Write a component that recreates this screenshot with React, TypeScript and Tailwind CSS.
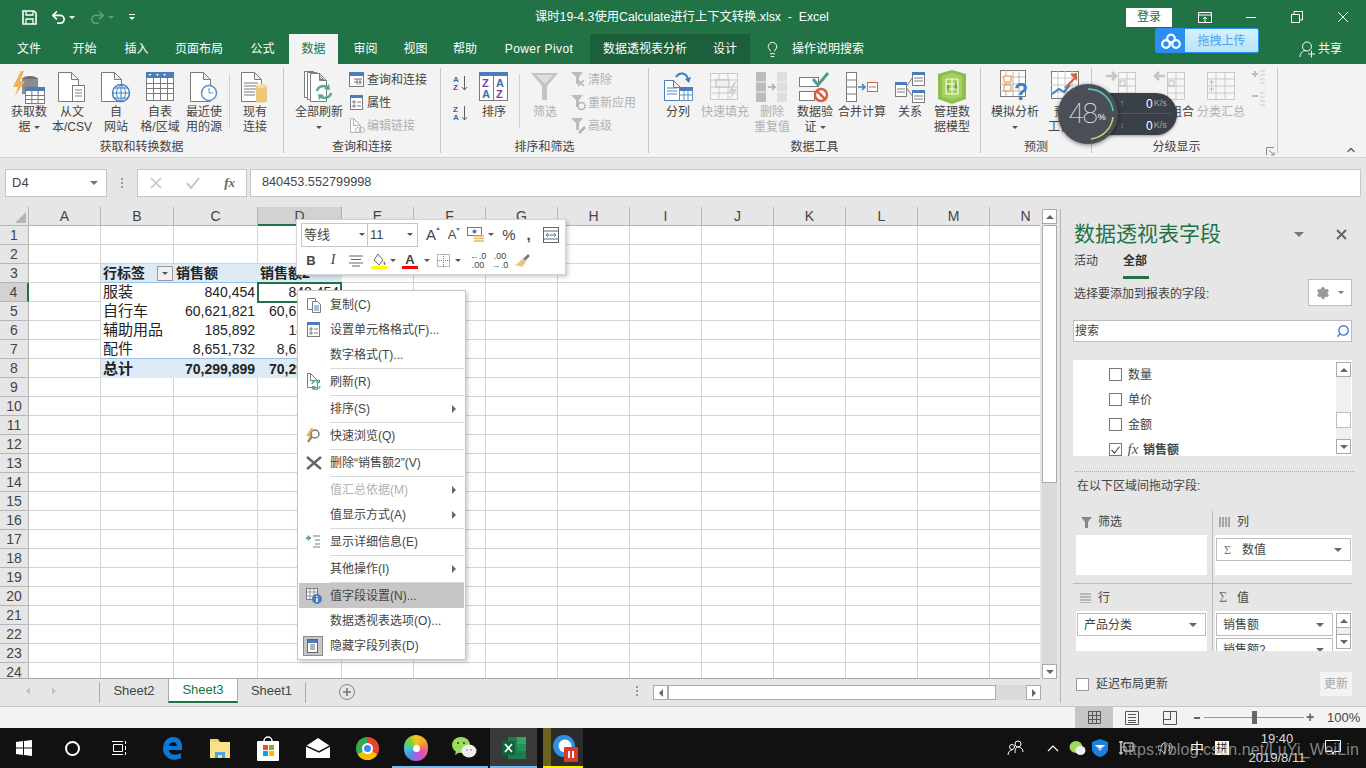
import type { ReactNode } from "react";
import { Undo2, Redo2, Lightbulb, Settings, Search, ChevronUp } from "lucide-react";

const GRAY = "#7b7b7b";

// ---- ribbon icons ----
function Svg({ w = 32, h = 32, children }: { w?: number; h?: number; children: ReactNode }) {
  return (
    <svg width={w} height={h} viewBox={`0 0 ${w} ${h}`} fill="none" className="shrink-0">
      {children}
    </svg>
  );
}

const Page = ({ x = 1, y = 1, w = 20, h = 29, c = GRAY }: { x?: number; y?: number; w?: number; h?: number; c?: string }) => (
  <path d={`M${x + 0.5} ${y + 0.5}h${w - 7}l7 7v${h - 7}h-${w}z M${x + w - 7 + 0.5} ${y + 0.5}v7h7`} stroke={c} fill="#fff" />
);

const TableGrid = ({ x, y, w, h, head = "#4a7ebb", c = GRAY }: { x: number; y: number; w: number; h: number; head?: string; c?: string }) => {
  const cw = w / 3;
  const ch = (h - 4) / 3;
  return (
    <g>
      <rect x={x + 0.5} y={y + 0.5} width={w} height={h} fill="#fff" stroke={c} />
      <rect x={x} y={y} width={w + 1} height={4} fill={head} />
      {[1, 2].map((i) => (
        <path key={i} d={`M${x + i * cw + 0.5} ${y + 4}v${h - 4}M${x} ${y + 4 + i * ch + 0.5}h${w}`} stroke={c} />
      ))}
    </g>
  );
};

const IconGetData = () => (
  <Svg w={36} h={34}>
    <ellipse cx="19" cy="9" rx="8" ry="3" fill="#6f6f6f" />
    <rect x="11" y="9" width="16" height="15" fill="#8c8c8c" />
    <path d="M10 1L2 17h5l-3 9 10-15H9l4-10z" fill="#eeb153" />
    <TableGrid x={14} y={17} w={19} h={16} />
  </Svg>
);
const IconText = () => (
  <Svg w={30} h={32}>
    <Page />
    <rect x="15.5" y="14.5" width="12" height="16" fill="#fff" stroke={GRAY} />
    <path d="M18 19h7M18 22h7M18 25h7" stroke={GRAY} />
  </Svg>
);
const IconWeb = () => (
  <Svg w={32} h={32}>
    <Page />
    <circle cx="21" cy="22" r="8.5" fill="#fff" stroke="#3f7fbf" strokeWidth="1.5" />
    <path d="M12.5 22h17M21 13.5v17M15 17h12M15 27h12M21 13.5c-6 5-6 12 0 17M21 13.5c6 5 6 12 0 17" stroke="#3f7fbf" />
  </Svg>
);
const IconTable = () => (
  <Svg w={30} h={32}>
    <rect x="1.5" y="1.5" width="27" height="28" fill="#fff" stroke={GRAY} />
    <rect x="1" y="1" width="28" height="6" fill="#4a7ebb" />
    {[8, 15, 22].map((x) => (
      <path key={x} d={`M${x + 0.5} 7v22`} stroke={GRAY} />
    ))}
    {[12, 17, 22].map((y) => (
      <path key={y} d={`M2 ${y + 0.5}h26`} stroke={GRAY} />
    ))}
    <path d="M3.5 3h3l-1.5 2zM11 3h3l-1.5 2zM18 3h3l-1.5 2z" fill="#fff" />
  </Svg>
);
const IconRecent = () => (
  <Svg w={30} h={32}>
    <Page />
    <circle cx="20" cy="22" r="7.5" fill="#fff" stroke="#5b90c8" strokeWidth="1.5" />
    <path d="M20 17v5h4" stroke="#5b90c8" />
  </Svg>
);
const IconExisting = () => (
  <Svg w={30} h={32}>
    <Page />
    <path d="M4 12h14M4 15h14M4 18h14M4 21h11M4 24h11" stroke={GRAY} />
    <rect x="16" y="15" width="11" height="15" fill="#eec77d" />
    <ellipse cx="21.5" cy="15" rx="5.5" ry="2" fill="#f4d9a4" />
    <ellipse cx="21.5" cy="30" rx="5.5" ry="1.5" fill="#eec77d" />
  </Svg>
);
const IconRefreshAll = () => (
  <Svg w={32} h={34}>
    <Page x={1} y={1} w={16} h={26} />
    <Page x={4} y={2} w={16} h={27} />
    <Page x={7} y={3} w={16} h={28} />
    <path d="M14 21a6 6 0 0 1 11-2M28 23a6 6 0 0 1-11 2" stroke="#5aa894" strokeWidth="2.5" />
    <path d="M26 14l1 6-6-1zM16 30l-1-6 6 1z" fill="#5aa894" />
  </Svg>
);
const SmallQuery = () => (
  <Svg w={16} h={16}>
    <rect x="0.5" y="0.5" width="14" height="14" fill="#fff" stroke={GRAY} />
    <rect x="0" y="0" width="15" height="4" fill="#4a7ebb" />
    <path d="M5 7h8M5 10h8M8 7v6M11 7v6" stroke={GRAY} />
  </Svg>
);
const SmallProps = () => (
  <Svg w={16} h={16}>
    <rect x="1.5" y="0.5" width="12" height="14" fill="#fff" stroke={GRAY} />
    <rect x="1" y="0" width="13" height="3" fill="#4a7ebb" />
    <path d="M4 6h2v2H4zM8 7h4M4 10h2v2H4zM8 11h4" stroke={GRAY} />
  </Svg>
);
const SmallLink = () => (
  <Svg w={16} h={16}>
    <Page x={1} y={0} w={10} h={14} c="#b5b5b5" />
    <circle cx="9" cy="12" r="2.5" stroke="#b5b5b5" />
    <circle cx="13" cy="12" r="2.5" stroke="#b5b5b5" />
  </Svg>
);
const SortSmall = ({ up }: { up?: boolean }) => (
  <Svg w={16} h={17}>
    <text x="0" y="7" fontSize="8" fontFamily="Liberation Sans" fontWeight="700" fill={up ? "#2f6fad" : "#7a3f9d"}>
      {up ? "A" : "Z"}
    </text>
    <text x="0" y="15" fontSize="8" fontFamily="Liberation Sans" fontWeight="700" fill={up ? "#7a3f9d" : "#2f6fad"}>
      {up ? "Z" : "A"}
    </text>
    <path d="M11.5 1v14M9 12l2.5 3 2.5-3" stroke="#606060" />
  </Svg>
);
const IconSort = () => (
  <Svg w={30} h={32}>
    <rect x="0.5" y="1.5" width="28" height="28" fill="#fff" stroke={GRAY} />
    <rect x="0" y="1" width="29" height="4" fill="#4a7ebb" />
    <path d="M14.5 5v24" stroke={GRAY} />
    <text x="3" y="16" fontSize="11" fontFamily="Liberation Sans" fontWeight="700" fill="#7a3f9d">Z</text>
    <text x="3" y="27" fontSize="11" fontFamily="Liberation Sans" fontWeight="700" fill="#2f6fad">A</text>
    <text x="17" y="16" fontSize="11" fontFamily="Liberation Sans" fontWeight="700" fill="#2f6fad">A</text>
    <text x="17" y="27" fontSize="11" fontFamily="Liberation Sans" fontWeight="700" fill="#7a3f9d">Z</text>
  </Svg>
);
const IconFunnel = () => (
  <Svg w={30} h={32}>
    <path d="M1 2h27L17 15v14h-5V15z" fill="#c4c4c4" />
    <path d="M6 4h17l-8 9z" fill="#dedede" />
  </Svg>
);
const SmallFunnel = ({ mark }: { mark: "x" | "r" | "p" }) => (
  <Svg w={17} h={17}>
    <path d="M1 1h12L9 6v7H6V6z" fill="#bcbcbc" />
    {mark === "x" && <path d="M8 9l6 6M14 9l-6 6" stroke="#b5b5b5" strokeWidth="1.5" />}
    {mark === "r" && <circle cx="11.5" cy="12" r="3.5" stroke="#b5b5b5" strokeWidth="1.5" />}
    {mark === "p" && <path d="M8 15l6-6 2 2-6 6z" fill="#b5b5b5" />}
  </Svg>
);
const IconColumns = () => (
  <Svg w={32} h={32}>
    <Page x={2} y={9} w={16} h={20} c="#4a7ebb" />
    <path d="M5 17h10M5 20h10M5 23h10" stroke="#4a7ebb" />
    <rect x="17.5" y="16.5" width="13" height="13" fill="#fff" stroke="#5f8fbf" />
    <rect x="17" y="16" width="14" height="4" fill="#4a7ebb" />
    <path d="M22 20v9M26 20v9M18 24h12" stroke="#5f8fbf" />
    <path d="M14 6c3-5 10-5 12 2" stroke="#3b7fc4" strokeWidth="2" />
    <path d="M29 6l-2 6-4-4z" fill="#3b7fc4" />
  </Svg>
);
const IconFlash = () => (
  <Svg w={32} h={32}>
    <rect x="1.5" y="2.5" width="27" height="26" fill="#f7f7f7" stroke="#c9c9c9" />
    <path d="M1 9h27M1 16h27M1 22h27M10 3v25M19 3v25" stroke="#c9c9c9" />
    <rect x="7" y="9" width="13" height="7" fill="#f0f0f0" stroke="#b9b9b9" />
    <path d="M25 11l-6 11h4l-3 8 8-12h-4l3-7z" fill="#d0d0d0" />
  </Svg>
);
const IconDedupe = () => (
  <Svg w={34} h={32}>
    <rect x="1" y="1" width="10" height="30" fill="#bcbcbc" />
    <rect x="22" y="1" width="10" height="30" fill="#dedede" />
    <path d="M1 11h10M1 21h10M22 11h10M22 21h10" stroke="#f3f3f3" />
    <path d="M13 16h6M17 13l3 3-3 3" stroke="#aaa" strokeWidth="1.5" />
  </Svg>
);
const IconValidate = () => (
  <Svg w={34} h={32}>
    <rect x="1.5" y="6.5" width="19" height="9" fill="#fff" stroke={GRAY} />
    <rect x="1.5" y="20.5" width="15" height="9" fill="#fff" stroke={GRAY} />
    <path d="M15 8l5 6 10-12" stroke="#4f9d8c" strokeWidth="3" />
    <circle cx="23" cy="24" r="6" fill="#fff" stroke="#d9603e" strokeWidth="2.5" />
    <path d="M19 20l8 8" stroke="#d9603e" strokeWidth="2.5" />
  </Svg>
);
const IconConsolidate = () => (
  <Svg w={34} h={32}>
    <rect x="1.5" y="1.5" width="10" height="29" fill="#fff" stroke={GRAY} />
    <path d="M1 9h10M1 16h10M1 23h10" stroke={GRAY} />
    <path d="M13 16h7M17 13l3 3-3 3" stroke="#3b7fc4" strokeWidth="1.5" />
    <rect x="22.5" y="11.5" width="10" height="9" fill="#fff" stroke="#d9603e" />
    <path d="M24 16h7" stroke="#d9603e" />
  </Svg>
);
const IconRelations = () => (
  <Svg w={32} h={32}>
    <path d="M12 16L19 6M12 16l7 10" stroke={GRAY} />
    <rect x="1.5" y="11.5" width="11" height="14" fill="#fff" stroke={GRAY} />
    <rect x="1" y="11" width="12" height="3" fill="#4a7ebb" />
    <rect x="18.5" y="1.5" width="12" height="13" fill="#fff" stroke={GRAY} />
    <rect x="18" y="1" width="13" height="3" fill="#4a7ebb" />
    <rect x="18.5" y="19.5" width="12" height="12" fill="#fff" stroke={GRAY} />
    <rect x="18" y="19" width="13" height="3" fill="#4a7ebb" />
    <path d="M3 18h8M3 21h8M20 7h9M20 10h9M20 25h9M20 28h9" stroke={GRAY} />
  </Svg>
);
const IconModel = () => (
  <Svg w={30} h={34}>
    <path d="M15 0l14 4v25l-14 5-14-5V4z" fill="#8cc04b" />
    <path d="M5 6l10-3 10 3v21l-10 3-10-3z" fill="#a4d05f" />
    <path d="M9 9h12v15H9z" stroke="#fff" />
    <path d="M15 9v15M9 14h12M9 19h12" stroke="#fff" />
    <path d="M11 20v-5M19 13v6" stroke="#3c6e28" />
  </Svg>
);
const IconWhatIf = () => (
  <Svg w={30} h={34}>
    <rect x="0.5" y="0.5" width="25" height="26" fill="#fff" stroke={GRAY} />
    <path d="M0 7h25M0 14h25M0 21h25M6 0v26M13 0v26M19 0v26" stroke="#b5b5b5" />
    <path d="M4 6h7v6H4zM4 15h7v6H4z" stroke="#e08a3c" fill="#fff" />
    <text x="14" y="30" fontSize="23" fontFamily="Liberation Sans" fontWeight="700" fill="#3f7fbf">?</text>
  </Svg>
);
const IconForecast = () => (
  <Svg w={30} h={32}>
    <rect x="0.5" y="0.5" width="27" height="27" fill="#fff" stroke={GRAY} />
    <path d="M0 7h27M0 14h27M0 21h27M7 0v27M14 0v27M21 0v27" stroke="#c9c9c9" />
    <path d="M1 23l7-5 5 3 6-7" stroke="#3f7fbf" strokeWidth="2" />
    <path d="M14 17l11-11" stroke="#d9603e" strokeWidth="2" />
    <path d="M26 2v8l-7-7z" fill="#d9603e" />
  </Svg>
);
const IconGroup = ({ back }: { back?: boolean }) => (
  <Svg w={32} h={32}>
    <rect x="13.5" y="1.5" width="17" height="27" fill="#f7f7f7" stroke="#c9c9c9" />
    <path d="M22 1v27M13 8h17M13 15h17M13 22h17" stroke="#c9c9c9" />
    <rect x="15" y="10" width="5" height="5" stroke="#bdbdbd" />
    <path d={back ? "M11 5H1M5 1L1 5l4 4" : "M1 5h10M7 1l4 4-4 4"} stroke="#c4c4c4" strokeWidth="2.5" />
  </Svg>
);
const IconSubtotal = () => (
  <Svg w={30} h={32}>
    <rect x="1.5" y="1.5" width="27" height="27" fill="#f7f7f7" stroke="#c9c9c9" />
    <path d="M1 8h27M1 15h27M1 22h27M10 1v27M19 1v27" stroke="#c9c9c9" />
    <path d="M3 11h5M5.5 9v5M3 18h5M5.5 16v5" stroke="#bdbdbd" />
  </Svg>
);

// ---- ribbon building blocks ----
function Big({ w, icon, l1, l2, off, caret }: { w: string; icon: ReactNode; l1: string; l2?: ReactNode; off?: boolean; caret?: boolean }) {
  return (
    <div className={`flex flex-col items-center shrink-0 whitespace-nowrap ${w} ${off ? "text-[#b1b1b1]" : "text-[#444]"}`}>
      <div className="h-[37px] flex items-center justify-center">{icon}</div>
      <div className="leading-[15px] h-[15px] text-center">{l1}</div>
      <div className="leading-[15px] h-[15px] text-center flex items-center gap-[3px]">
        {l2}
        {caret && <Caret />}
      </div>
    </div>
  );
}

const Caret = ({ c = "border-t-[#555]" }: { c?: string }) => (
  <span className={`inline-block w-0 h-0 border-x-[3px] border-x-transparent border-t-[3px] ${c}`} />
);

function Small({ icon, text, off }: { icon: ReactNode; text: string; off?: boolean }) {
  return (
    <div className={`h-[23px] flex items-center whitespace-nowrap ${off ? "text-[#b1b1b1]" : "text-[#444]"}`}>
      <span className="w-[18px] flex">{icon}</span>
      {text}
    </div>
  );
}

function Group({ w, label, children, pr }: { w: string; label: string; children: ReactNode; pr?: string }) {
  return (
    <div className={`flex flex-col shrink-0 ${w}`}>
      <div className="flex h-[73px] pt-1">{children}</div>
      <div className={`h-[15px] leading-[15px] mt-[3px] text-center text-[#444] ${pr ?? ""}`}>{label}</div>
    </div>
  );
}

const GroupSep = () => <div className="w-px shrink-0 my-1 bg-[#c6c6c6]" />;
const VSep = () => <div className="w-px h-[54px] mt-[6px] shrink-0 bg-[#d4d4d4]" />;

function Ribbon() {
  return (
    <div className="relative flex h-[94px] bg-[#f3f3f3] border-b border-[#d2d2d2] text-xs">
      <Group w="w-[283px]" label="获取和转换数据">
        <div className="w-[7px]" />
        <Big w="w-[44px]" icon={<IconGetData />} l1="获取数" l2="据" caret />
        <Big w="w-[42px]" icon={<IconText />} l1="从文" l2="本/CSV" />
        <Big w="w-[46px]" icon={<IconWeb />} l1="自" l2="网站" />
        <Big w="w-[42px]" icon={<IconTable />} l1="自表" l2="格/区域" />
        <Big w="w-[46px]" icon={<IconRecent />} l1="最近使" l2="用的源" />
        <div className="w-[2px]" />
        <VSep />
        <Big w="w-[50px]" icon={<IconExisting />} l1="现有" l2="连接" />
      </Group>
      <GroupSep />
      <Group w="w-[156px]" label="查询和连接">
        <div className="w-[10px]" />
        <Big w="w-[50px]" icon={<IconRefreshAll />} l1="全部刷新" caret />
        <div className="w-[5px]" />
        <div className="flex flex-col">
          <Small icon={<SmallQuery />} text="查询和连接" />
          <Small icon={<SmallProps />} text="属性" />
          <Small icon={<SmallLink />} text="编辑链接" off />
        </div>
      </Group>
      <GroupSep />
      <Group w="w-[207px]" label="排序和筛选">
        <div className="w-[12px]" />
        <div className="flex flex-col gap-[13px] pt-[7px]">
          <SortSmall up />
          <SortSmall />
        </div>
        <Big w="w-[50px]" icon={<IconSort />} l1="排序" />
        <VSep />
        <div className="w-[5px]" />
        <Big w="w-[40px]" icon={<IconFunnel />} l1="筛选" off />
        <div className="w-[5px]" />
        <div className="flex flex-col">
          <Small icon={<SmallFunnel mark="x" />} text="清除" off />
          <Small icon={<SmallFunnel mark="r" />} text="重新应用" off />
          <Small icon={<SmallFunnel mark="p" />} text="高级" off />
        </div>
      </Group>
      <GroupSep />
      <Group w="w-[331px]" label="数据工具">
        <div className="w-[6px]" />
        <Big w="w-[46px]" icon={<IconColumns />} l1="分列" />
        <Big w="w-[48px]" icon={<IconFlash />} l1="快速填充" off />
        <Big w="w-[46px]" icon={<IconDedupe />} l1="删除" l2="重复值" off />
        <Big w="w-[40px]" icon={<IconValidate />} l1="数据验" l2="证" caret />
        <Big w="w-[54px]" icon={<IconConsolidate />} l1="合并计算" />
        <Big w="w-[42px]" icon={<IconRelations />} l1="关系" />
        <Big w="w-[42px]" icon={<IconModel />} l1="管理数" l2="据模型" />
      </Group>
      <GroupSep />
      <Group w="w-[110px]" label="预测">
        <div className="w-[8px]" />
        <Big w="w-[52px]" icon={<IconWhatIf />} l1="模拟分析" caret />
        <Big w="w-[50px]" icon={<IconForecast />} l1="预测" l2="工作表" />
      </Group>
      <GroupSep />
      <Group w="w-[185px]" label="分级显示" pr="pr-[16px]">
        <div className="w-[5px]" />
        <Big w="w-[48px]" icon={<IconGroup />} l1="组合" />
        <Big w="w-[50px]" icon={<IconGroup back />} l1="取消组合" />
        <Big w="w-[52px]" icon={<IconSubtotal />} l1="分类汇总" off />
        <div className="w-[5px]" />
        <div className="flex flex-col gap-[8px] pt-[2px]">
          <Svg w={14} h={14}>
            <path d="M0 4h6M3 1v6" stroke="#bdbdbd" strokeWidth="2" />
            <path d="M8 1h5M8 5h5M8 9h5M8 13h5" stroke="#c9c9c9" />
          </Svg>
          <Svg w={14} h={14}>
            <path d="M0 4h6" stroke="#bdbdbd" strokeWidth="2" />
            <path d="M8 1h5M8 5h5M8 9h5M8 13h5" stroke="#c9c9c9" />
          </Svg>
        </div>
      </Group>
      <GroupSep />
      {/* dialog launcher + collapse chevron */}
      <div className="absolute left-[1266px] top-[83px]">
        <Svg w={9} h={9}>
          <path d="M0.5 8V0.5H8" stroke="#8a8a8a" />
          <path d="M3 3l5 5M8 5v3H5" stroke="#8a8a8a" />
        </Svg>
      </div>
      <ChevronUp className="absolute left-[1345px] top-[80px] w-3 h-3 text-[#666]" strokeWidth={3} />
    </div>
  );
}

// ---- title bar + tabs ----
function TitleBar() {
  return (
    <div className="relative h-[34px] bg-[#217346] text-white flex items-center shrink-0">
      <div className="flex items-center h-full">
        <div className="w-[22px]" />
        <Svg w={15} h={15}>
          <path d="M1 1h11l2 2v11H1z" stroke="#fff" strokeWidth="1.6" />
          <path d="M4 1v4h7V1M4 14V9h7v5" stroke="#fff" strokeWidth="1.3" />
        </Svg>
        <div className="w-[13px]" />
        <Undo2 className="w-[17px] h-[17px]" strokeWidth={2.4} />
        <div className="w-[2px]" />
        <Caret c="border-t-white" />
        <div className="w-[14px]" />
        <Redo2 className="w-[17px] h-[17px] text-[#5f9c7c]" strokeWidth={2.4} />
        <div className="w-[2px]" />
        <Caret c="border-t-[#5f9c7c]" />
        <div className="w-[15px]" />
        <span className="flex flex-col items-center gap-[2px]">
          <span className="w-[6px] h-px bg-white" />
          <Caret c="border-t-white" />
        </span>
      </div>
      <div className="absolute left-[535px] top-0 h-full flex items-center text-[12.3px] whitespace-pre">
        课时19-4.3使用Calculate进行上下文转换.xlsx  -  Excel
      </div>
      <div className="ml-auto flex items-center h-full">
        <div className="w-[46px] h-[19px] bg-white text-[#217346] text-xs flex items-center justify-center mr-[10px]">登录</div>
        <div className="w-[46px] flex justify-center">
          <Svg w={14} h={14}>
            <path d="M0.5 2.5h13v10h-13zM0.5 5h13M7 12V7M5 9l2-2 2 2" stroke="#fff" />
          </Svg>
        </div>
        <div className="w-[46px] flex justify-center">
          <span className="w-[10px] h-px bg-white" />
        </div>
        <div className="w-[46px] flex justify-center">
          <Svg w={12} h={12}>
            <path d="M0.5 3.5h8v8h-8zM3 3V0.5h8.5V9H9" stroke="#fff" />
          </Svg>
        </div>
        <div className="w-[46px] flex justify-center">
          <Svg w={12} h={12}>
            <path d="M1 1l10 10M11 1L1 11" stroke="#fff" />
          </Svg>
        </div>
      </div>
    </div>
  );
}

const tabs: [string, string][] = [
  ["文件", "w-[58px]"],
  ["开始", "w-[53px]"],
  ["插入", "w-[51px]"],
  ["页面布局", "w-[74px]"],
  ["公式", "w-[53px]"],
];
const tabs2: [string, string][] = [
  ["审阅", "w-[55px]"],
  ["视图", "w-[45px]"],
  ["帮助", "w-[54px]"],
];

function Tabs() {
  return (
    <div className="relative h-[30px] bg-[#217346] text-white text-xs flex shrink-0">
      {tabs.map(([t, w]) => (
        <div key={t} className={`${w} flex items-center justify-center`}>{t}</div>
      ))}
      <div className="w-[49px] bg-[#f3f3f3] text-[#217346] flex items-center justify-center">数据</div>
      {tabs2.map(([t, w]) => (
        <div key={t} className={`${w} flex items-center justify-center`}>{t}</div>
      ))}
      <div className="w-[94px] flex items-center justify-center tracking-[0.4px]">Power Pivot</div>
      <div className="w-[4px]" />
      <div className="w-[110px] bg-[#1e5f3b] flex items-center justify-center">数据透视表分析</div>
      <div className="w-[50px] bg-[#1e5f3b] flex items-center justify-center">设计</div>
      <div className="w-[14px]" />
      <div className="flex items-center">
        <Lightbulb className="w-[17px] h-[19px]" strokeWidth={1.4} />
      </div>
      <div className="w-[11px]" />
      <div className="flex items-center">操作说明搜索</div>
      <div className="ml-auto mr-[24px] flex items-center gap-[2px]">
        <Svg w={17} h={17}>
          <circle cx="8" cy="5.5" r="4.5" stroke="#fff" />
          <path d="M1 16c0-4 2.5-6.5 6-6.5M9 13h7M12.5 9.5v7" stroke="#fff" />
        </Svg>
        共享
      </div>
    </div>
  );
}

// ---- formula bar ----
function FormulaBar() {
  return (
    <div className="h-[49px] bg-[#e6e6e6] flex items-start pt-[11px] pl-[5px] pr-[5px] shrink-0 text-[#444]">
      <div className="w-[102px] h-[28px] bg-white border border-[#c6c6c6] flex items-center justify-between px-[6px] text-[13px]">
        D4
        <span className="inline-block w-0 h-0 border-x-[4px] border-x-transparent border-t-[4px] border-t-[#777] mr-[2px]" />
      </div>
      <div className="w-[30px] h-[28px] flex flex-col items-center justify-center gap-[2px]">
        <span className="w-[2px] h-[2px] bg-[#999]" />
        <span className="w-[2px] h-[2px] bg-[#999]" />
        <span className="w-[2px] h-[2px] bg-[#999]" />
      </div>
      <div className="w-[110px] h-[28px] bg-white border border-[#c6c6c6] flex items-center justify-between pl-[12px] pr-[11px]">
        <Svg w={12} h={12}>
          <path d="M1 1l10 10M11 1L1 11" stroke="#c4c4c4" strokeWidth="1.6" />
        </Svg>
        <Svg w={14} h={12}>
          <path d="M1 6l4 5 8-10" stroke="#c4c4c4" strokeWidth="2" />
        </Svg>
        <span className="font-['Liberation_Serif',serif] italic font-bold text-[13px] text-[#666]">fx</span>
      </div>
      <div className="w-[3px]" />
      <div className="flex-1 h-[28px] bg-white border border-[#c6c6c6] flex items-center pl-[11px] text-[12.7px]">840453.552799998</div>
    </div>
  );
}

// ---- sheet ----
const colLetters = ["A", "B", "C", "D", "E", "F", "G", "H", "I", "J", "K", "L", "M", "N"];
const cellBase = "border-r border-b border-[#d4d4d4] overflow-hidden whitespace-nowrap flex items-center";

const pivot: Record<number, [string, string, string]> = {
  4: ["服装", "840,454", "840,454"],
  5: ["自行车", "60,621,821", "60,621,821"],
  6: ["辅助用品", "185,892", "185,892"],
  7: ["配件", "8,651,732", "8,651,732"],
  8: ["总计", "70,299,899", "70,299,899"],
};

function SheetCell({ row, col }: { row: number; col: number }) {
  // B = 1, C = 2, D = 3
  if (row === 3 && col >= 1 && col <= 3) {
    return (
      <div className="border-b border-[#9bc2e6] bg-[#ddebf7] overflow-hidden whitespace-nowrap flex items-center pl-[2px] pt-px font-bold text-[14px] text-[#222] justify-between">
        {col === 1 && "行标签"}
        {col === 1 && (
          <span className="w-[16px] h-[15px] bg-[#f0f0f0] border border-[#999] flex items-center justify-center mr-px">
            <Caret />
          </span>
        )}
        {col === 2 && "销售额"}
        {col === 3 && "销售额2"}
      </div>
    );
  }
  const data = pivot[row];
  if (data && col >= 1 && col <= 3) {
    const total = row === 8;
    const last = row === 7;
    return (
      <div
        className={`overflow-hidden whitespace-nowrap flex items-center pt-px text-[#222] ${col === 1 ? "pl-[2px] text-[15px]" : "justify-end pr-[3px] text-[14px]"} ${
          total ? "bg-[#ddebf7] font-bold text-[14px]" : "border-b"
        } ${last ? "border-[#9bc2e6]" : "border-transparent"}`}
      >
        {data[col - 1]}
      </div>
    );
  }
  return <div className={cellBase} />;
}

function Sheet() {
  const rows = Array.from({ length: 24 }, (_, i) => i + 1);
  return (
    <div className="relative w-[1040px] h-[472px] overflow-hidden bg-white border-b border-[#aaa]">
      <div className="grid w-[1062px] grid-cols-[29px_72px_73px_84px_84px_72px_72px_72px_72px_72px_72px_72px_72px_72px_72px] auto-rows-[19px] font-['Liberation_Sans','Noto_Sans_CJK_SC',sans-serif]">
        <div className="bg-[#e6e6e6] border-r border-b border-[#b5b5b5] flex items-end justify-end pr-[2px] pb-[2px]">
          <span className="w-0 h-0 border-l-[11px] border-l-transparent border-b-[11px] border-b-[#b5b5b5]" />
        </div>
        {colLetters.map((c) => (
          <div
            key={c}
            className={`flex items-center justify-center pt-px text-[14px] text-[#444] border-r ${
              c === "D" ? "bg-[#d2d2d2] border-b-2 border-b-[#217346] border-r-[#ababab]" : "bg-[#e6e6e6] border-b border-b-[#b5b5b5] border-r-[#b5b5b5]"
            }`}
          >
            {c}
          </div>
        ))}
        {rows.map((r) => (
          <div key={r} className="contents">
            <div
              className={`flex items-center justify-center pt-px text-[14px] text-[#444] border-b border-b-[#b5b5b5] ${
                r === 4 ? "bg-[#d2d2d2] border-r-2 border-r-[#217346]" : "bg-[#e6e6e6] border-r border-r-[#b5b5b5]"
              }`}
            >
              {r}
            </div>
            {colLetters.map((_, i) => (
              <SheetCell key={i} row={r} col={i} />
            ))}
          </div>
        ))}
      </div>
      {/* selected cell outline */}
      <div className="absolute left-[257px] top-[75px] w-[85px] h-[21px] border-2 border-[#217346]" />
    </div>
  );
}

function ScrollBtn({ dir }: { dir: "up" | "down" | "left" | "right" }) {
  const tri =
    dir === "up"
      ? "border-x-[4px] border-x-transparent border-b-[4px] border-b-[#666]"
      : dir === "down"
      ? "border-x-[4px] border-x-transparent border-t-[4px] border-t-[#666]"
      : dir === "left"
      ? "border-y-[4px] border-y-transparent border-r-[4px] border-r-[#666]"
      : "border-y-[4px] border-y-transparent border-l-[4px] border-l-[#666]";
  return (
    <div className="w-[15px] h-[15px] bg-white border border-[#ababab] flex items-center justify-center shrink-0">
      <span className={`w-0 h-0 ${tri}`} />
    </div>
  );
}

function SheetTabs() {
  return (
    <div className="h-[27px] flex bg-[#e6e6e6] text-[14px] text-[#444]">
      <div className="w-[100px] flex items-center pl-[26px] gap-[22px] pb-[3px] border-r border-[#ababab] my-[3px]">
        <span className="w-0 h-0 border-y-[4px] border-y-transparent border-r-[4px] border-r-[#c4c4c4]" />
        <span className="w-0 h-0 border-y-[4px] border-y-transparent border-l-[4px] border-l-[#c4c4c4]" />
      </div>
      <div className="w-[68px] flex items-center justify-center pb-[3px] text-[13px]">Sheet2</div>
      <div className="w-[70px] h-[25px] bg-white border-x border-[#ababab] border-b-2 border-b-[#217346] text-[#217346] flex items-center justify-center text-[13px] -mt-px">Sheet3</div>
      <div className="w-[68px] flex items-center justify-center pb-[3px] text-[13px] border-r border-[#ababab] my-[3px]">Sheet1</div>
      <div className="w-[33px]" />
      <div className="w-[16px] h-[16px] mt-[5px] rounded-full border border-[#888] flex items-center justify-center text-[#777]">
        <Svg w={10} h={10}>
          <path d="M5 1v8M1 5h8" stroke="#777" strokeWidth="1.6" />
        </Svg>
      </div>
      <div className="w-[274px]" />
      <div className="w-[15px] flex flex-col items-center gap-[2px] pt-[7px]">
        <span className="w-[2px] h-[2px] bg-[#999]" />
        <span className="w-[2px] h-[2px] bg-[#999]" />
        <span className="w-[2px] h-[2px] bg-[#999]" />
      </div>
      <div className="w-[9px]" />
      <div className="flex h-[15px] mt-[6px]">
        <ScrollBtn dir="left" />
        <div className="w-[328px] bg-white border border-[#ababab]" />
        <div className="w-[30px] bg-[#dadada]" />
        <ScrollBtn dir="right" />
      </div>
    </div>
  );
}

// ---- context menu ----
type MenuItem = { t: string; i?: ReactNode; off?: boolean; sub?: boolean; hl?: boolean; sep?: boolean };

const menu: MenuItem[] = [
  {
    t: "复制(C)",
    i: (
      <Svg w={16} h={16}>
        <path d="M1.5 1.5h8v11h-8z" stroke={GRAY} fill="#fff" />
        <path d="M6.5 4.5h5l3 3v8h-8z" stroke={GRAY} fill="#fff" />
        <path d="M8 9h5M8 11h5M8 13h5" stroke="#4a7ebb" />
      </Svg>
    ),
  },
  { t: "设置单元格格式(F)...", i: <SmallProps /> },
  { t: "数字格式(T)...", sep: true },
  {
    t: "刷新(R)",
    sep: true,
    i: (
      <Svg w={16} h={17}>
        <Page x={1} y={0} w={10} h={14} />
        <path d="M6 11a4 4 0 0 1 7-2M14 13a4 4 0 0 1-7 2" stroke="#5aa894" strokeWidth="1.6" />
        <path d="M14 6v4h-4zM6 17v-4h4z" fill="#5aa894" />
      </Svg>
    ),
  },
  { t: "排序(S)", sub: true, sep: true },
  {
    t: "快速浏览(Q)",
    sep: true,
    i: (
      <Svg w={17} h={16}>
        <path d="M6 0L1 8h3l-2 6 6-8H5l3-6z" fill="#eeb153" />
        <circle cx="10" cy="6" r="4" stroke={GRAY} strokeWidth="1.5" fill="none" />
        <path d="M7 9l-4 5" stroke={GRAY} strokeWidth="2" />
      </Svg>
    ),
  },
  {
    t: "删除“销售额2”(V)",
    sep: true,
    i: (
      <Svg w={16} h={14}>
        <path d="M1 1l14 12M15 1L1 13" stroke="#666" strokeWidth="2.4" />
      </Svg>
    ),
  },
  { t: "值汇总依据(M)", off: true, sub: true },
  { t: "值显示方式(A)", sub: true, sep: true },
  {
    t: "显示详细信息(E)",
    sep: true,
    i: (
      <Svg w={15} h={13}>
        <path d="M0 3h5M2.5 0.5v5" stroke="#5aa894" strokeWidth="2" />
        <path d="M7 1h7M9 5h5M9 9h5M7 12h7" stroke={GRAY} />
      </Svg>
    ),
  },
  { t: "其他操作(I)", sub: true, sep: true },
  {
    t: "值字段设置(N)...",
    hl: true,
    i: (
      <Svg w={16} h={16}>
        <rect x="0.5" y="0.5" width="11" height="11" fill="#f5f5f5" stroke={GRAY} />
        <path d="M4 1v10M8 1v10M1 4h10M1 8h10" stroke="#999" />
        <circle cx="11" cy="11" r="5" fill="#4a7ebb" />
        <path d="M11 10v4M11 8v1" stroke="#fff" strokeWidth="1.5" />
      </Svg>
    ),
  },
  { t: "数据透视表选项(O)..." },
  {
    t: "隐藏字段列表(D)",
    i: (
      <span className="w-[20px] h-[20px] -ml-[2px] bg-[#c6c6c6] border border-[#8a8a8a] flex items-center justify-center">
        <Svg w={11} h={14}>
          <rect x="0.5" y="0.5" width="10" height="13" fill="#fff" stroke="#666" />
          <rect x="1" y="1" width="9" height="3" fill="#4a7ebb" />
          <path d="M3 6h5M3 8h5M3 10h5" stroke="#666" />
        </Svg>
      </span>
    ),
  },
];

function ContextMenu() {
  return (
    <div className="absolute left-[297px] top-[290px] w-[169px] h-[370px] bg-white border border-[#c6c6c6] py-px shadow-[2px_2px_4px_rgba(0,0,0,0.2)] text-xs">
      {menu.map((m) => (
        <div key={m.t}>
          <div className={`h-[25px] flex items-center ${m.hl ? "bg-[#c6c6c6] mx-px" : ""} ${m.off ? "text-[#b1b1b1]" : "text-[#444]"}`}>
            <span className={`flex justify-center shrink-0 ${m.hl ? "w-[30px]" : "w-[31px]"} pl-[3px] pr-[3px]`}>{m.i}</span>
            <span className="pl-px whitespace-nowrap flex-1">{m.t}</span>
            {m.sub && <span className="w-0 h-0 mr-[9px] border-y-[4px] border-y-transparent border-l-[4px] border-l-[#666]" />}
          </div>
          {m.sep && <div className="h-[2px] ml-[32px] mr-px border-b border-[#d8d8d8]" />}
        </div>
      ))}
    </div>
  );
}

function MiniToolbar() {
  return (
    <div className="absolute left-[296px] top-[219px] w-[270px] h-[56px] bg-white border border-[#d4d4d4] shadow-[2px_2px_4px_rgba(0,0,0,0.2)] text-[#444] text-xs">
      <div className="flex items-center h-[28px] pt-px pl-[4px]">
        <div className="w-[67px] h-[24px] border border-[#c6c6c6] flex items-center justify-between px-[2px] text-[13px]">
          等线
          <Caret c="border-t-[#555]" />
        </div>
        <div className="w-[50px] h-[24px] border border-[#c6c6c6] border-l-0 flex items-center justify-between pl-[2px] pr-[4px] text-[13px]">
          11
          <Caret c="border-t-[#555]" />
        </div>
        <div className="w-[4px]" />
        <div className="w-[22px] flex items-start justify-center text-[15px] font-medium">A<span className="w-0 h-0 mt-[2px] border-x-[2px] border-x-transparent border-b-[3px] border-b-[#4a7ebb]" /></div>
        <div className="w-[20px] flex items-start justify-center text-[13px] font-medium">A<span className="w-0 h-0 mt-[2px] border-x-[2px] border-x-transparent border-t-[3px] border-t-[#4a7ebb]" /></div>
        <div className="w-[24px] flex justify-center">
          <Svg w={18} h={17}>
            <rect x="0.5" y="1.5" width="14" height="8" fill="#fff" stroke="#4a7ebb" />
            <circle cx="7.5" cy="5.5" r="2" fill="#4a7ebb" />
            <path d="M7 10h10M7 12.5h10M7 15h10" stroke="#e6b566" strokeWidth="1.5" />
          </Svg>
        </div>
        <Caret />
        <div className="w-[20px] ml-[5px] text-center text-[15px] font-medium">%</div>
        <div className="w-[19px] text-center text-[15px] font-bold">,</div>
        <div className="w-[24px] flex justify-center ml-[1px]">
          <Svg w={16} h={16}>
            <rect x="0.5" y="0.5" width="15" height="15" stroke="#666" fill="#fff" />
            <path d="M0 4h16M0 12h16" stroke="#666" />
            <path d="M3 8h10M3 8l2-2M3 8l2 2M13 8l-2-2M13 8l-2 2" stroke="#4a7ebb" />
          </Svg>
        </div>
      </div>
      <div className="flex items-center h-[24px] pl-[4px] pt-px">
        <div className="w-[20px] text-center font-['Liberation_Sans',sans-serif] font-bold text-[13px]">B</div>
        <div className="w-[24px] text-center font-['Liberation_Serif',serif] italic text-[14px]">I</div>
        <div className="w-[22px] flex justify-center">
          <Svg w={14} h={12}>
            <path d="M0 1h14M2 4.5h10M0 8h14M3 11h8" stroke="#666" />
          </Svg>
        </div>
        <div className="w-[22px] ml-[1px] flex justify-center">
          <Svg w={16} h={16}>
            <path d="M7 1l5 6-4 5-5-5z" fill="#fff" stroke="#666" />
            <path d="M13 8c1 2 2 3 1 4-1 0-2-2-1-4z" fill="#666" />
            <rect x="0" y="13" width="16" height="3" fill="#ffff00" />
          </Svg>
        </div>
        <Caret />
        <div className="w-[6px]" />
        <div className="w-[16px] flex flex-col items-center">
          <span className="font-bold text-[13px] leading-[13px]">A</span>
          <span className="w-[16px] h-[3px] bg-[#ff0000]" />
        </div>
        <div className="w-[6px]" />
        <Caret />
        <div className="w-[7px]" />
        <Svg w={13} h={13}>
          <rect x="0.5" y="0.5" width="12" height="12" stroke="#777" strokeDasharray="1 1" />
          <path d="M6.5 0v13M0 6.5h13" stroke="#777" strokeDasharray="1 1" />
        </Svg>
        <div className="w-[5px]" />
        <Caret />
        <div className="w-[6px]" />
        <span className="w-[22px] text-[9px] leading-[9px] text-center"><span className="text-[#3f7fbf]">←</span>.0<br />.00</span>
        <span className="w-[22px] text-[9px] leading-[9px] text-center">.00<br /><span className="text-[#3f7fbf]">→</span>.0</span>
        <div className="w-[22px] flex justify-center">
          <Svg w={17} h={15}>
            <path d="M9 6l5-5 2 2-5 5z" fill="#777" />
            <path d="M9 5l3 4-4 5-7-2 3-2z" fill="#e6c48a" />
          </Svg>
        </div>
      </div>
    </div>
  );
}

// ---- field pane ----
const Check = ({ on }: { on?: boolean }) => (
  <span className="w-[13px] h-[13px] border border-[#777] bg-white flex items-center justify-center shrink-0">
    {on && (
      <Svg w={9} h={8}>
        <path d="M0.5 4l3 3 5-6.5" stroke="#555" strokeWidth="1.2" />
      </Svg>
    )}
  </span>
);

function FieldChip({ text, w, sigma }: { text: string; w: string; sigma?: boolean }) {
  return (
    <div className={`${w} h-[23px] shrink-0 bg-white border border-[#bdbdbd] flex items-center px-[6px] text-xs text-[#444]`}>
      {sigma && <span className="w-[19px] pl-[1px] text-[#777] font-['Liberation_Serif',serif]">Σ</span>}
      <span className="flex-1 whitespace-nowrap">{text}</span>
      <span className="w-0 h-0 mr-[2px] border-x-[4px] border-x-transparent border-t-[4px] border-t-[#666]" />
    </div>
  );
}

function AreaLabel({ icon, text }: { icon: ReactNode; text: string }) {
  return (
    <div className="h-[22px] flex items-center text-xs text-[#444]">
      <span className="w-[22px] flex items-center pl-[4px]">{icon}</span>
      {text}
    </div>
  );
}

function FieldPane() {
  return (
    <div className="w-[305px] h-[499px] bg-[#e6e6e6] text-xs text-[#444] flex flex-col shrink-0 overflow-hidden pl-[12px] pr-[14px]">
      <div className="flex items-center h-[44px] pt-[10px] shrink-0">
        <div className="text-[21px] text-[#217346] ml-px">数据透视表字段</div>
        <span className="ml-auto mr-[32px] w-0 h-0 border-x-[5px] border-x-transparent border-t-[5px] border-t-[#777]" />
        <span className="mr-[5px] flex">
          <Svg w={11} h={11}>
            <path d="M1 1l9 9M10 1l-9 9" stroke="#666" strokeWidth="2" />
          </Svg>
        </span>
      </div>
      <div className="flex h-[28px] shrink-0 pl-px">
        <div className="w-[49px] pt-[2px]">活动</div>
        <div className="w-[26px] border-b-[3px] border-[#217346] font-bold text-[#333] pt-[2px] whitespace-nowrap">全部</div>
      </div>
      <div className="flex justify-between h-[27px] shrink-0 pl-px">
        <div className="pt-[7px]">选择要添加到报表的字段:</div>
        <div className="w-[44px] h-[27px] bg-white border border-[#bdbdbd] flex items-center justify-center gap-[8px]">
          <Settings className="w-[14px] h-[14px] text-[#999] fill-[#999]" strokeWidth={1.5} />
          <Caret c="border-t-[#777]" />
        </div>
      </div>
      <div className="h-[14px] shrink-0" />
      <div className="w-[279px] h-[22px] bg-white border border-[#bdbdbd] flex items-center justify-between pl-[1px] pr-[1px] shrink-0">
        搜索
        <Search className="w-[14px] h-[14px] text-[#3f7fbf] -scale-x-100" strokeWidth={2.4} />
      </div>
      <div className="h-[18px] shrink-0" />
      <div className="w-[279px] h-[96px] bg-white flex shrink-0 overflow-hidden">
        <div className="flex-1 pl-[36px] pt-[2px]">
          {["数量", "单价", "金额"].map((f) => (
            <div key={f} className="h-[25px] flex items-center gap-[6px]">
              <Check />
              {f}
            </div>
          ))}
          <div className="h-[25px] flex items-center">
            <Check on />
            <span className="w-[20px] text-center font-['Liberation_Serif',serif] italic text-[15px] text-[#555] ml-px">fx</span>
            <span className="font-bold">销售额</span>
          </div>
        </div>
        <div className="w-[15px] mr-px mt-[2px] mb-[2px] bg-[#f0f0f0] flex flex-col">
          <ScrollBtn dir="up" />
          <div className="h-[35px] shrink-0" />
          <div className="w-[15px] h-[16px] shrink-0 bg-white border border-[#bdbdbd]" />
          <div className="h-[11px] shrink-0" />
          <ScrollBtn dir="down" />
        </div>
      </div>
      <div className="h-[16px] border-b border-dotted border-[#aaa] ml-[2px] mr-[-3px] shrink-0" />
      <div className="pl-[4px] pt-[6px] h-[39px] shrink-0">在以下区域间拖动字段:</div>
      <div className="grid grid-cols-[140px_1fr] w-[279px] shrink-0">
        <div className="pl-[3px] pr-[5px] border-r border-[#bdbdbd] border-b pb-[8px]">
          <AreaLabel
            icon={
              <Svg w={13} h={12}>
                <path d="M1 1h11L8 6v6H5V6z" fill="#888" />
              </Svg>
            }
            text="筛选"
          />
          <div className="h-[40px] mt-[2px] bg-white" />
        </div>
        <div className="border-b border-[#bdbdbd] pl-[2px] pb-[8px]">
          <AreaLabel
            icon={
              <Svg w={12} h={10}>
                <path d="M1 0v10M4 0v10M7 0v10M10 0v10" stroke="#888" strokeWidth="1.4" />
              </Svg>
            }
            text="列"
          />
          <div className="h-[40px] mt-[2px] bg-white pt-[3px] pl-px pr-px">
            <FieldChip w="w-[135px]" text="数值" sigma />
          </div>
        </div>
        <div className="pl-[3px] pr-[5px] border-r border-[#bdbdbd] pt-[3px]">
          <AreaLabel
            icon={
              <Svg w={12} h={10}>
                <path d="M0 1h11M0 4h11M0 7h11M0 10h11" stroke="#888" strokeWidth="1.2" />
              </Svg>
            }
            text="行"
          />
          <div className="h-[40px] mt-[2px] bg-white pt-[2px] pl-px pr-px">
            <FieldChip w="w-[129px]" text="产品分类" />
          </div>
        </div>
        <div className="pl-[2px] pt-[3px]">
          <AreaLabel icon={<span className="font-['Liberation_Serif',serif] text-[14px] text-[#777]">Σ</span>} text="值" />
          <div className="relative h-[40px] mt-[2px] bg-white pt-[2px] pl-px flex flex-col gap-[2px] overflow-hidden">
            <FieldChip w="w-[117px]" text="销售额" />
            <FieldChip w="w-[117px]" text="销售额2" />
            <div className="absolute right-px top-[2px] w-[15px] flex flex-col">
              <ScrollBtn dir="up" />
              <div className="h-[6px] border-x border-[#ababab] bg-[#f0f0f0]" />
              <ScrollBtn dir="down" />
            </div>
          </div>
        </div>
      </div>
      <div className="flex-1 flex items-center justify-between pl-[3px] pb-[3px] pt-[14px] w-[279px]">
        <div className="flex items-center gap-[7px]">
          <span className="w-[13px] h-[13px] bg-white border border-[#999]" />
          延迟布局更新
        </div>
        <div className="w-[32px] h-[24px] bg-[#f3f3f3] text-[#a6a6a6] flex items-center justify-center">更新</div>
      </div>
    </div>
  );
}

// ---- status bar ----
function StatusBar() {
  return (
    <div className="h-[22px] bg-[#f3f3f3] border-t border-[#c6c6c6] flex justify-end text-[#444] shrink-0">
      <div className="w-[38px] bg-[#c6c6c6] flex items-center justify-center">
        <Svg w={13} h={13}>
          <path d="M0.5 0.5h12v12H0.5zM4.5 0v13M8.5 0v13M0 4.5h13M0 8.5h13" stroke="#555" />
        </Svg>
      </div>
      <div className="w-[38px] flex items-center justify-center">
        <Svg w={14} h={14}>
          <path d="M0.5 0.5h13v13H0.5z" stroke="#555" />
          <path d="M3 3.5h8M3 6.5h8M3 9.5h8M3 11.5h8" stroke="#555" />
        </Svg>
      </div>
      <div className="w-[38px] flex items-center justify-center">
        <Svg w={14} h={14}>
          <path d="M0.5 0.5h13v13H0.5zM0 8.5h8M7.5 0v8" stroke="#555" />
        </Svg>
      </div>
      <div className="w-[5px]" />
      <div className="w-[6px] mt-[10px] h-[2px] bg-[#666]" />
      <div className="w-[4px]" />
      <div className="relative w-[100px] flex items-center">
        <div className="w-full h-px bg-[#999]" />
        <div className="absolute left-[48px] top-[4px] w-[5px] h-[13px] bg-[#666]" />
      </div>
      <div className="w-px" />
      <div className="flex items-center text-[14px] text-[#666] font-bold w-[10px] justify-center">+</div>
      <div className="w-[12px]" />
      <div className="flex items-center w-[38px] mr-px font-['Liberation_Sans',sans-serif] text-[13px]">100%</div>
    </div>
  );
}

// ---- taskbar ----
function Slot({ w, active, line, children }: { w: string; active?: string; line?: string; children: ReactNode }) {
  return (
    <div className={`relative h-full flex items-center justify-center shrink-0 ${w} ${active ?? ""}`}>
      {children}
      {line && <div className={`absolute left-0 right-0 bottom-0 h-[2px] ${line}`} />}
    </div>
  );
}

function TaskBar() {
  return (
    <div className="relative h-[40px] bg-[#111] text-white flex shrink-0">
      <Slot w="w-[48px]">
        <Svg w={16} h={16}>
          <path d="M0 2l7-1v6.500H0zM8 1l8-1v7.500H8zM0 8.500h7V15l-7-1zM8 8.500h8V16l-8-1z" fill="#fff" />
        </Svg>
      </Slot>
      <Slot w="w-[48px]">
        <span className="w-[15px] h-[15px] rounded-full border-2 border-white" />
      </Slot>
      <Slot w="w-[47px]">
        <Svg w={16} h={16}>
          <path d="M1.500 4.500h9v7h-9zM0 1.500h11M0 14.500h11M13.500 1v3M13.500 6v4M13.500 12v3" stroke="#fff" />
        </Svg>
      </Slot>
      <div className="w-[5px]" />
      <Slot w="w-[48px]">
        <Svg w={22} h={24}>
          <path d="M2 13C2 5 7 1 12 1c6 0 9 4 9 10v3H8c0 5 7 6 12 3v5c-6 3-12 2-15-2-2-2-3-4-3-7zM8 10h8c0-5-7-5-8 0z" fill="#0a78d7" />
        </Svg>
      </Slot>
      <Slot w="w-[47px]">
        <Svg w={22} h={22}>
          <path d="M1 2h8l2 3h10v16H1z" fill="#f3d16e" />
          <rect x="1" y="5" width="20" height="16" fill="#fbe08b" />
          <path d="M6 21v-6h10v6h-3v-3H9v3z" fill="#4fa6dd" />
        </Svg>
      </Slot>
      <Slot w="w-[50px]">
        <Svg w={24} h={26}>
          <path d="M8 6a4 4 0 0 1 8 0" stroke="#fff" strokeWidth="1.5" />
          <rect x="1" y="6" width="22" height="20" rx="1" fill="#fff" />
          <rect x="7" y="10" width="5" height="5" fill="#f25022" />
          <rect x="13" y="10" width="5" height="5" fill="#7fba00" />
          <rect x="7" y="16" width="5" height="5" fill="#00a4ef" />
          <rect x="13" y="16" width="5" height="5" fill="#ffb900" />
        </Svg>
      </Slot>
      <Slot w="w-[50px]">
        <Svg w={24} h={20}>
          <path d="M0 8L12 0l12 8v12H0z" fill="#fff" />
          <path d="M0 8l13 6 11-6" stroke="#111" strokeWidth="1.5" />
        </Svg>
      </Slot>
      <Slot w="w-[49px]">
        <span className="relative w-[23px] h-[23px] rounded-full bg-[conic-gradient(#ea4335_0deg_120deg,#fbbc05_120deg_240deg,#34a853_240deg_360deg)] flex items-center justify-center">
          <span className="w-[11px] h-[11px] rounded-full bg-[#4285f4] border-2 border-white" />
        </span>
      </Slot>
      <Slot w="w-[48px]" line="bg-[#76b9ed]">
        <span className="relative w-[24px] h-[26px] rounded-full bg-[conic-gradient(#f4c430_0deg,#f5a623_50deg,#e9569b_110deg,#b45be0_170deg,#4a90e2_220deg,#41c7c7_270deg,#7ed321_320deg,#f4c430_360deg)] flex items-center justify-center">
          <span className="w-[7px] h-[7px] rounded-full bg-white" />
        </span>
      </Slot>
      <Slot w="w-[48px]" line="bg-[#76b9ed]">
        <Svg w={26} h={24}>
          <ellipse cx="10" cy="9" rx="9" ry="8" fill="#9bdc5a" />
          <path d="M5 15l-1 4 5-3z" fill="#9bdc5a" />
          <ellipse cx="18" cy="15" rx="7.500" ry="6.500" fill="#eee" />
          <circle cx="7" cy="7" r="1" fill="#333" />
          <circle cx="13" cy="7" r="1" fill="#333" />
          <circle cx="16" cy="14" r="0.800" fill="#666" />
          <circle cx="20" cy="14" r="0.800" fill="#666" />
        </Svg>
      </Slot>
      <div className="w-[2px]" />
      <Slot w="w-[47px]" active="bg-[#3a3a3a]" line="bg-[#76b9ed]">
        <Svg w={26} h={24}>
          <rect x="7" y="1" width="18" height="22" fill="#1f7a4c" />
          <rect x="16" y="1" width="9" height="7" fill="#33a36b" />
          <rect x="16" y="8" width="9" height="7" fill="#21915a" />
          <rect x="1" y="5" width="13" height="14" fill="#10623a" />
          <path d="M4 8l7 8M11 8l-7 8" stroke="#fff" strokeWidth="1.6" />
        </Svg>
      </Slot>
      <div className="w-[6px]" />
      <div className="relative w-[40px] h-full bg-[#2b2b2b] flex shrink-0">
        <div className="w-[8px] h-full bg-[#6b6320]" />
        <div className="flex-1 flex items-center justify-center pr-[4px]">
          <Svg w={26} h={28}>
            <circle cx="12" cy="12" r="11" fill="#2f8fe0" />
            <circle cx="13" cy="12" r="6.500" fill="#fff" />
            <rect x="12" y="13" width="14" height="15" rx="1" fill="#d93a2b" />
            <path d="M17 17v7M21 17v7" stroke="#fff" strokeWidth="2" />
          </Svg>
        </div>
        <div className="absolute left-0 right-0 bottom-0 h-[2px] bg-[#ffee00]" />
      </div>
      <div className="flex-1" />
      <div className="flex items-center text-[13px] pr-[25px]">
        <Svg w={18} h={18}>
          <circle cx="11" cy="5" r="3" stroke="#fff" />
          <circle cx="5" cy="8" r="2.500" stroke="#fff" />
          <path d="M1 16c0-3 2-5 4-5M8 14c0-4 1-6 3-6 3 0 5 2 5 5" stroke="#fff" />
        </Svg>
        <div className="w-[22px]" />
        <Svg w={12} h={7}>
          <path d="M1 6l5-5 5 5" stroke="#fff" strokeWidth="1.2" />
        </Svg>
        <div className="w-[10px]" />
        <Svg w={17} h={16}>
          <ellipse cx="7" cy="7" rx="6.500" ry="6" fill="#9bdc5a" />
          <ellipse cx="11.500" cy="10.500" rx="5" ry="4.500" fill="#eee" />
        </Svg>
        <div className="w-[6px]" />
        <Svg w={16} h={18}>
          <path d="M8 0l8 3v7c0 4-4 7-8 8-4-1-8-4-8-8V3z" fill="#1d7fe0" />
          <path d="M3 6h10L8 12z" fill="#fff" />
          <path d="M5 7.500l3 3 3-3" stroke="#1d7fe0" />
        </Svg>
        <div className="w-[10px]" />
        <Svg w={16} h={16}>
          <path d="M3 1v13M6 3h9v8H6z" stroke="#fff" />
          <path d="M1 2h4M1 13h4" stroke="#fff" />
        </Svg>
        <div className="w-[24px]" />
        <Svg w={15} h={14}>
          <path d="M0 5h3l4-4v12l-4-4H0z" stroke="#ccc" />
          <path d="M10 4c2 2 2 4 0 6M12 2c3 3 3 7 0 10" stroke="#ccc" />
        </Svg>
        <div className="w-[14px]" />
        <span className="w-[20px] text-center text-[14px]">中</span>
        <div className="w-[8px]" />
        <span className="w-[14px] h-[14px] bg-white text-[#111] text-[11px] leading-[14px] text-center">拼</span>
        <div className="w-[16px]" />
        <div className="w-[64px] h-full flex flex-col items-center justify-center leading-[19px] text-[13px] text-[#ddd]">
          <span>19:40</span>
          <span>2019/8/11</span>
        </div>
        <div className="w-[16px]" />
        <Svg w={16} h={16}>
          <path d="M0.500 0.500h15v11H9l-1 3-1-3H0.500z" stroke="#fff" />
        </Svg>
      </div>
      <div className="absolute left-[1119px] top-[10px] text-[16px] text-[#b8b8b8]/70 font-['Liberation_Sans',sans-serif] whitespace-nowrap tracking-[0.1px]">
        https://blog.csdn.net/LuYi_WeiLin
      </div>
    </div>
  );
}

// ---- overlays over the ribbon ----
function UploadBadge() {
  return (
    <div className="absolute left-[1155px] top-[28px] w-[104px] h-[25px] rounded-[2px] border border-[#2a8ff0] flex overflow-hidden text-xs">
      <div className="w-[29px] bg-[#2a8ff0] flex items-center justify-center">
        <Svg w={20} h={16}>
          <circle cx="10" cy="5.500" r="3.800" stroke="#fff" strokeWidth="2.200" />
          <circle cx="5" cy="11" r="3.800" stroke="#fff" strokeWidth="2.200" />
          <circle cx="15" cy="11" r="3.800" stroke="#fff" strokeWidth="2.200" />
        </Svg>
      </div>
      <div className="flex-1 bg-gradient-to-b from-[#d6f0fd] to-[#b8e3fa] text-[#4aa3ee] flex items-center justify-center">拖拽上传</div>
    </div>
  );
}

function NetWidget() {
  return (
    <div className="absolute left-[1058px] top-[84px] w-[120px] h-[60px] text-white">
      <div className="absolute left-[30px] top-[9px] w-[89px] h-[42px] rounded-r-[21px] bg-[#3b3f47] shadow-[0_1px_3px_rgba(0,0,0,0.4)]">
        <div className="absolute left-[29px] right-[6px] top-[20px] h-px bg-[#55585f]" />
        <div className="absolute left-[32px] top-px h-[20px] flex items-center">
          <span className="text-[#4db4f0] text-[9px] w-[26px]">↑</span>
          <span className="font-['Liberation_Sans',sans-serif] text-[12px]">0</span>
          <span className="text-[9px] text-[#aaa] ml-px">K/s</span>
        </div>
        <div className="absolute left-[32px] top-[23px] h-[20px] flex items-center">
          <span className="text-[#3ec14a] text-[9px] w-[26px]">↓</span>
          <span className="font-['Liberation_Sans',sans-serif] text-[12px]">0</span>
          <span className="text-[9px] text-[#aaa] ml-px">K/s</span>
        </div>
      </div>
      <div className="absolute left-0 top-0 w-[60px] h-[60px] rounded-full bg-[#4a4e56] shadow-[0_1px_4px_rgba(0,0,0,0.5)] flex items-center justify-center pr-[2px]">
        <span className="font-['Roboto',sans-serif] text-[28px] font-thin tracking-[-1px] text-[#eee]">48</span>
        <span className="text-[9px] mt-[8px] ml-px">%</span>
        <svg width="60" height="60" viewBox="0 0 60 60" fill="none" className="absolute left-0 top-0">
          <path d="M30 5a25 25 0 0 1 25 22" stroke="#4fd4c4" strokeWidth="1.500" />
          <path d="M55 33a25 25 0 0 1-22 22" stroke="#c6dc6a" strokeWidth="1.500" />
        </svg>
      </div>
    </div>
  );
}

export default function App() {
  return (
    <div className="relative w-[1366px] h-[768px] overflow-hidden flex flex-col bg-[#e6e6e6] font-['Liberation_Sans','Noto_Sans_CJK_SC',sans-serif]">
      <TitleBar />
      <Tabs />
      <Ribbon />
      <FormulaBar />
      <div className="flex h-[499px] shrink-0">
        <div className="w-[1060px] flex flex-col shrink-0">
          <div className="flex h-[472px]">
            <Sheet />
            <div className="w-[20px] pl-[2px] pr-[3px] flex flex-col bg-[#e6e6e6]">
              <div className="h-[2px]" />
              <ScrollBtn dir="up" />
              <div className="h-[1px]" />
              <div className="h-[258px] bg-white border border-[#ababab]" />
              <div className="flex-1 bg-[#dadada]" />
              <ScrollBtn dir="down" />
            </div>
          </div>
          <SheetTabs />
        </div>
        <div className="w-px bg-[#b5b5b5] mb-[3px] mt-[2px]" />
        <FieldPane />
      </div>
      <StatusBar />
      <TaskBar />
      <MiniToolbar />
      <ContextMenu />
      <UploadBadge />
      <NetWidget />
    </div>
  );
}
